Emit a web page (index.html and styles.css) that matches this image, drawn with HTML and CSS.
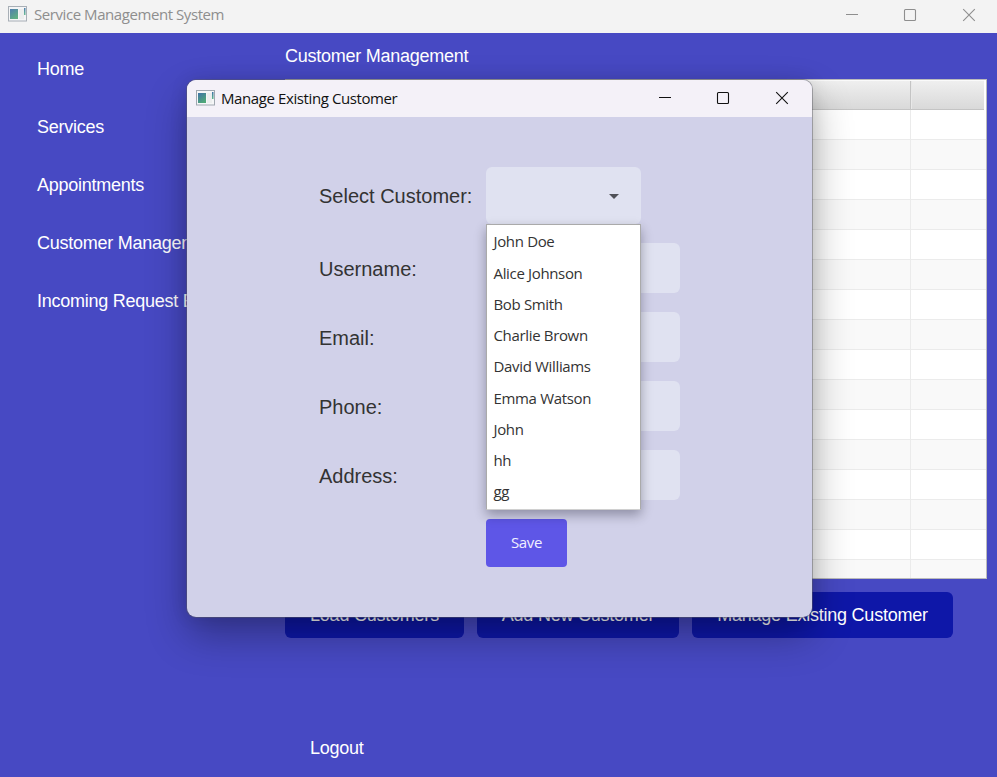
FILE: index.html
```
<!DOCTYPE html>
<html lang="en">
<head>
<meta charset="utf-8">
<title>Service Management System</title>
<link rel="stylesheet" href="styles.css">
</head>
<body>
<svg class="defs" width="0" height="0">
  <defs>
    <linearGradient id="pane" x1="0" y1="0" x2="0.6" y2="1"><stop offset="0" stop-color="#3f72a8"/><stop offset="1" stop-color="#4fa878"/></linearGradient>
    <linearGradient id="bar" x1="0" y1="0" x2="0" y2="1"><stop offset="0" stop-color="#3f72a8"/><stop offset="1" stop-color="#5cb88a"/></linearGradient>
    <symbol id="app" viewBox="0 0 19 16">
      <rect x=".5" y=".5" width="18" height="14.5" fill="#f5f6f7" stroke="#a0a8b0"/>
      <rect x="2" y="3" width="8" height="10" fill="url(#pane)"/>
      <rect x="11" y="3" width="5" height="10" fill="#eceeee"/>
      <rect x="16" y="2" width="1.5" height="7" fill="url(#bar)"/>
    </symbol>
    <symbol id="min" viewBox="0 0 14 14"><path d="M1 6.5h12" stroke="currentColor" fill="none"/></symbol>
    <symbol id="max" viewBox="0 0 14 14"><rect x="1.5" y="1.5" width="11" height="11" rx="1" stroke="currentColor" stroke-width="1.1" fill="none"/></symbol>
    <symbol id="close" viewBox="0 0 14 14"><path d="M1.2 1.2l11.6 11.6M12.8 1.2L1.2 12.8" stroke="currentColor" stroke-width="1.1" fill="none"/></symbol>
  </defs>
</svg>
<div class="window">
  <header class="titlebar">
    <svg class="appicon"><use href="#app"/></svg>
    <span class="title">Service Management System</span>
    <div class="controls">
      <svg><use href="#min"/></svg><svg><use href="#max"/></svg><svg><use href="#close"/></svg>
    </div>
  </header>
  <div class="content">
    <nav class="sidebar">
      <a>Home</a><a>Services</a><a>Appointments</a><a>Customer Management</a><a>Incoming Request E</a>
    </nav>
    <main class="main">
      <h1>Customer Management</h1>
      <div class="table">
        <div class="row head"><i></i><i></i></div>
        <div class="row"><i></i><i></i></div><div class="row"><i></i><i></i></div>
        <div class="row"><i></i><i></i></div><div class="row"><i></i><i></i></div>
        <div class="row"><i></i><i></i></div><div class="row"><i></i><i></i></div>
        <div class="row"><i></i><i></i></div><div class="row"><i></i><i></i></div>
        <div class="row"><i></i><i></i></div><div class="row"><i></i><i></i></div>
        <div class="row"><i></i><i></i></div><div class="row"><i></i><i></i></div>
        <div class="row"><i></i><i></i></div><div class="row"><i></i><i></i></div>
        <div class="row"><i></i><i></i></div><div class="row"><i></i><i></i></div>
      </div>
      <div class="actions">
        <button class="load">Load Customers</button>
        <button class="add">Add New Customer</button>
        <button class="manage">Manage Existing Customer</button>
      </div>
      <a class="logout">Logout</a>
    </main>
  </div>
</div>
<section class="dialog">
  <header class="dialogbar">
    <svg class="appicon"><use href="#app"/></svg>
    <span class="title">Manage Existing Customer</span>
    <div class="controls">
      <svg><use href="#min"/></svg><svg><use href="#max"/></svg><svg><use href="#close"/></svg>
    </div>
  </header>
  <form class="form">
    <label>Select Customer:</label>
    <div class="combo">
      <svg class="arrow" viewBox="0 0 10 5"><path d="M0 0h10L5 5z" fill="#505158"/></svg>
      <ul class="menu">
        <li>John Doe</li><li>Alice Johnson</li><li>Bob Smith</li><li>Charlie Brown</li><li>David Williams</li><li>Emma Watson</li><li>John</li><li>hh</li><li>gg</li>
      </ul>
    </div>
    <label>Username:</label><div class="field"></div>
    <label>Email:</label><div class="field"></div>
    <label>Phone:</label><div class="field"></div>
    <label>Address:</label><div class="field"></div>
    <button type="button" class="save">Save</button>
  </form>
</section>
</body>
</html>
```
FILE: styles.css
```
* { box-sizing: border-box; }
body { margin: 0; width: 997px; height: 777px; overflow: hidden; position: relative; font-family: "Liberation Sans", Arial, sans-serif; }
.defs { position: absolute; }
.window { height: 777px; display: flex; flex-direction: column; background: #4749c3; }
.titlebar, .dialogbar { display: flex; align-items: center; font-family: "Open Sans", "Noto Sans", sans-serif; flex: none; }
.titlebar { height: 33px; padding: 0 21px 4px 8px; background: #f3f3f3; color: #8e8e8e; font-size: 15px; letter-spacing: -0.43px; }
.titlebar .title { padding-bottom: 2px; }
.titlebar .appicon { opacity: .9; }
.appicon { width: 19px; height: 16px; margin-right: 7px; margin-bottom: 1px; }
.title { white-space: nowrap; }
.controls { margin-left: auto; display: flex; }
.controls svg { width: 14px; height: 14px; display: block; margin-left: 44px; }
.controls svg:last-child { margin-left: 45px; }
.dialogbar .controls { margin-bottom: 2px; }
.content { flex: 1; display: flex; }
.sidebar { width: 285px; padding: 7px 0 0 37px; display: flex; flex-direction: column; flex: none; color: #fff; font-size: 18px; letter-spacing: -0.25px; }
.sidebar a { height: 58px; line-height: 58px; white-space: nowrap; }
.main { flex: 1; display: flex; flex-direction: column; color: #fff; font-size: 18px; letter-spacing: -0.25px; }
.main h1 { margin: 0; height: 46px; line-height: 46px; font-size: 18px; font-weight: 400; }
.table { width: 702px; height: 500px; border: 1px solid #bbb; background: #fff; overflow: hidden; }
.row { height: 30px; display: grid; grid-template-columns: 625px 1fr; border-bottom: 1px solid #ebebeb; }
.row i:first-child { border-right: 1px solid #ebebeb; }
.row:nth-child(odd) { background: #f9f9f9; }
.row.head { background: linear-gradient(#efefef, #d9d9d9); border-bottom-color: #c4c4c4; margin-right: 2px; border-top: 1px solid #fafafa; }
.row.head i:first-child { border-right-color: #c4c4c4; }
.row.head i:last-child { border-left: 1px solid #e8e8e8; }
.actions { display: flex; gap: 13px; margin-top: 13px; }
.actions button { height: 46px; border: 0; border-radius: 6px; background: #0e17a8; color: #fff; font: 18px "Liberation Sans", Arial, sans-serif; letter-spacing: -0.23px; padding: 0; white-space: nowrap; }
.load { width: 179px; }
.add { width: 202px; }
.manage { width: 261px; }
.logout { margin: 100px 0 0 25px; line-height: 20px; }
.dialog { position: absolute; left: 187px; top: 80px; width: 625px; height: 537px; border-radius: 9px; background: #d1d1e9; box-shadow: 0 0 0 1px rgba(90,90,100,.45), 0 18px 40px rgba(0,0,0,.32), 0 0 18px rgba(0,0,0,.1); }
.dialogbar { height: 37px; border-radius: 9px 9px 0 0; background: #f4f1f8; color: #111; padding: 0 23px 0 9px; font-size: 15px; letter-spacing: -0.4px; }
.dialogbar .appicon { margin-right: 6px; margin-bottom: 1px; }
.dialogbar .title { padding-bottom: 1px; }
.form { display: grid; grid-template-columns: 167px 194px; grid-template-rows: 57px repeat(4, 50px) 48px; row-gap: 19px; padding: 50px 0 0 132px; color: #333; font-size: 20px; align-items: center; }
.form label { white-space: nowrap; padding-top: 2px; }
.form label:first-child { padding-top: 1px; }
.combo { width: 155px; height: 57px; border-radius: 6px; background: #e0e2f1; position: relative; }
.arrow { position: absolute; left: 123px; top: 27px; width: 10px; height: 5px; }
.field { height: 50px; border-radius: 6px; background: #e0e2f1; }
.menu { position: absolute; z-index: 2; left: 0; top: 57px; width: 155px; height: 286px; margin: 0; padding: 1.4px 0 0 6.5px; list-style: none; background: #fff; border: 1px solid #aaa; border-bottom-color: #d0d0d0; box-shadow: 0 5px 11px rgba(0,0,20,.32); font: 15px "Open Sans", "Noto Sans", sans-serif; letter-spacing: -0.34px; }
.menu li { height: 31.25px; line-height: 31px; }
.save { grid-column: 2; width: 81px; height: 48px; border: 0; border-radius: 4px; background: #5e56e7; color: #f0f0ff; font: 15px "Open Sans", "Noto Sans", sans-serif; padding: 0 0 2px; letter-spacing: -0.4px; }
```
